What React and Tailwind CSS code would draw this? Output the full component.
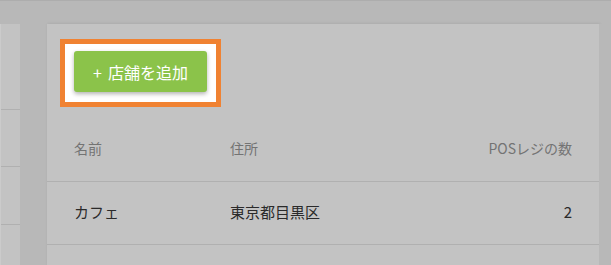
import React from "react";

const rows = [{ name: "カフェ", address: "東京都目黒区", registers: 2 }];

export default function App() {
    return (
        <div
            className="w-[611px] h-[265px] overflow-hidden bg-[#b8b8b8] flex flex-col"
            style={{ fontFamily: '"Noto Sans CJK JP", "Noto Sans", sans-serif' }}
        >
            <div className="h-[24px] shrink-0 border-t border-[#adadad]" />
            <div className="flex flex-1 min-h-0">
                {/* left list panel */}
                <div className="w-[20px] shrink-0 bg-[#c3c3c3] flex flex-col border-l border-[#cbcbcb]">
                    <div className="h-[86px] border-b border-[#b0b0b0]" />
                    <div className="h-[57px] border-b border-[#b0b0b0]" />
                    <div className="h-[58px] border-b border-[#b0b0b0]" />
                </div>

                {/* store card */}
                <div className="ml-[27px] w-[552px] shrink-0 bg-[#c3c3c3] shadow-[1px_0_3px_rgba(0,0,0,0.12)]">
                    <div className="pt-[15px] pl-[13px]">
                        <div className="inline-flex border-[5px] border-[#f08232] bg-white pt-[7px] pb-[10px] px-[9px]">
                            <button className="w-[133px] h-[41px] rounded-[3px] bg-[#8bc34a] text-white text-[16px] shadow-[0_2px_4px_rgba(0,0,0,0.3)] flex items-center justify-center gap-[6px]">
                                <span>+</span>
                                <span>店舗を追加</span>
                            </button>
                        </div>
                    </div>

                    <table className="w-full mt-[10px] border-collapse">
                        <thead>
                            <tr className="h-[64px] border-b border-[#b0b0b0] text-[14px] text-[#737373]">
                                <th className="pl-[27px] text-left font-normal w-[183px]">名前</th>
                                <th className="text-left font-normal">住所</th>
                                <th className="pr-[27px] text-right font-normal">POSレジの数</th>
                            </tr>
                        </thead>
                        <tbody>
                            {rows.map((row) => (
                                <tr key={row.name} className="h-[63px] border-b border-[#b0b0b0] text-[15px] text-[#2a2a2a]">
                                    <td className="pl-[27px]">{row.name}</td>
                                    <td>{row.address}</td>
                                    <td className="pr-[27px] text-right">{row.registers}</td>
                                </tr>
                            ))}
                        </tbody>
                    </table>
                </div>

                <div className="flex-1 bg-[#b8b8b8]" />
            </div>
        </div>
    );
}
